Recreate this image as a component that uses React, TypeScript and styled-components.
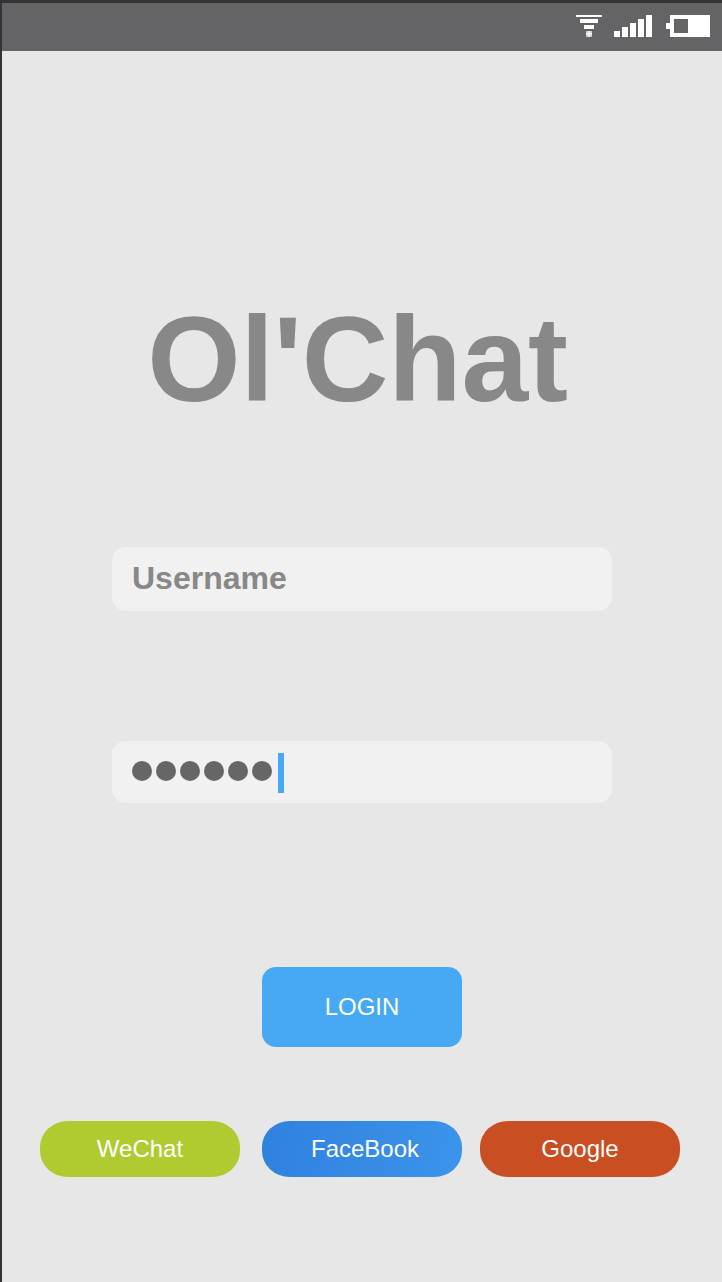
import React from 'react';
import styled, { createGlobalStyle } from 'styled-components';

const GlobalStyle = createGlobalStyle`
  * { box-sizing: border-box; }
  body {
    margin: 0;
    background: #e7e7e7;
    font-family: "Liberation Sans", Helvetica, Arial, sans-serif;
  }
`;

const Screen = styled.div`
  display: flex;
  flex-direction: column;
  width: 722px;
  height: 1282px;
  border-top: 3px solid #333333;
  border-left: 2px solid #333337;
  background: #e7e7e7;
  overflow: hidden;
`;

const StatusBar = styled.header`
  display: flex;
  justify-content: flex-end;
  flex: none;
  height: 48px;
  padding: 12px 12px 0 0;
  background: #646466;
`;

const StatusIcons = styled.svg`
  display: block;
  width: 134px;
  height: 22px;
`;

const Content = styled.main`
  display: flex;
  flex-direction: column;
  align-items: center;
`;

const Title = styled.h1`
  margin: 248px 0 0;
  padding-right: 9px;
  color: #888888;
  font-size: 120px;
  font-weight: 700;
  line-height: 120px;
  letter-spacing: -0.2px;
  white-space: nowrap;
`;

const Form = styled.form`
  display: flex;
  flex-direction: column;
  align-items: center;
  margin-top: 128px;
`;

const Field = styled.div<{ $height: number }>`
  display: flex;
  align-items: center;
  width: 500px;
  height: ${(p) => p.$height}px;
  padding: 0 20px;
  border-radius: 14px;
  background: #f1f1f1;
`;

const UsernameField = styled(Field)`
  margin-bottom: 130px;
  padding-bottom: 2px;
  color: #888888;
  font-size: 32px;
  font-weight: 700;
  line-height: 36px;
`;

const PasswordField = styled(Field)`
  align-items: flex-start;
  padding-top: 12px;
`;

const Dots = styled.div`
  display: flex;
  gap: 4px;
  padding-top: 8px;
`;

const Dot = styled.span`
  width: 20px;
  height: 20px;
  border-radius: 50%;
  background: #646668;
`;

const Caret = styled.span`
  width: 6px;
  height: 40px;
  margin-left: 6px;
  background: #47a9f3;
`;

const Button = styled.button`
  width: 200px;
  padding: 0;
  border: 0;
  color: #ffffff;
  font-family: inherit;
  font-size: 24px;
  line-height: 28px;
`;

const LoginButton = styled(Button)`
  height: 80px;
  margin-top: 164px;
  border-radius: 14px;
  background: #47a9f3;
`;

const SocialRow = styled.nav`
  display: flex;
  align-self: stretch;
  margin-top: 74px;
  padding-left: 38px;
`;

const SocialButton = styled(Button)<{ $fill: string; $gap?: number; $indent?: number }>`
  height: 56px;
  margin-right: ${(p) => p.$gap ?? 0}px;
  padding-left: ${(p) => p.$indent ?? 0}px;
  border-radius: 28px / 26px;
  background: ${(p) => p.$fill};
`;

const PASSWORD_LENGTH = 6;

export default function App() {
  return (
    <>
      <GlobalStyle />
      <Screen>
        <StatusBar>
          <StatusIcons viewBox="0 0 134 22" fill="#fff" shapeRendering="crispEdges">
            <path d="M0 0h26v2H0zM4 4h18v4H4zM8 10h10v4H8z" />
            <path d="M10 16h6v6h-6z" fillOpacity="0.65" />
            <path d="M12 16h2v2h2v2h-2v2h-2v-2h-2v-2h2z" fillOpacity="0.75" />
            <path d="M38 16h6v6h-6zM46 12h6v10h-6zM54 8h6v14h-6zM62 4h6v18h-6zM70 0h6v22h-6z" />
            <path fillRule="evenodd" d="M94 0h40v22H94v-8h-4V8h4zM98 4v14h14V4z" />
          </StatusIcons>
        </StatusBar>
        <Content>
          <Title>Ol'Chat</Title>
          <Form onSubmit={(e) => e.preventDefault()}>
            <UsernameField $height={64}>Username</UsernameField>
            <PasswordField $height={62}>
              <Dots>
                {Array.from({ length: PASSWORD_LENGTH }, (_, i) => (
                  <Dot key={i} />
                ))}
              </Dots>
              <Caret />
            </PasswordField>
            <LoginButton type="submit">LOGIN</LoginButton>
          </Form>
          <SocialRow>
            <SocialButton $fill="#aecb2f" $gap={22}>WeChat</SocialButton>
            <SocialButton $fill="linear-gradient(100deg, #2f81de, #3c94eb)" $gap={18} $indent={6}>
              FaceBook
            </SocialButton>
            <SocialButton $fill="#c94e21">Google</SocialButton>
          </SocialRow>
        </Content>
      </Screen>
    </>
  );
}
